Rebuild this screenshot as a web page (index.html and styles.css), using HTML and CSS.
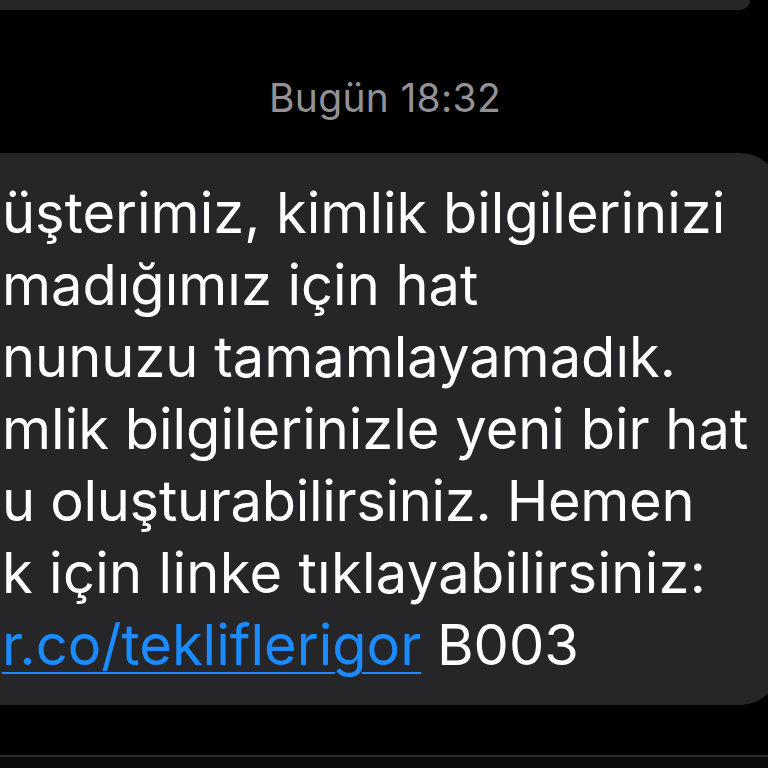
FILE: index.html
```html
<!DOCTYPE html>
<html lang="tr">
<head>
<meta charset="utf-8">
<link rel="stylesheet" href="styles.css">
</head>
<body>
<div class="screen">
  <div class="prev-bubble"></div>
  <div class="timestamp"><span class="day">Bugün</span> 18:32</div>
  <div class="bubble">
    <div class="line l1">üşterimiz, kimlik bilgilerinizi</div>
    <div class="line l2">madığımız için hat</div>
    <div class="line l3">nunuzu tamamlayamadık.</div>
    <div class="line l4">mlik bilgilerinizle yeni bir hat</div>
    <div class="line l5">u oluşturabilirsiniz. Hemen</div>
    <div class="line l6">k için linke tıklayabilirsiniz:</div>
    <div class="line l7"><a class="link" href="#">r.co/tekliflerigor</a> B003</div>
  </div>
  <div class="composer"></div>
</div>
</body>
</html>
```
FILE: styles.css
```css
html, body {
  margin: 0;
  padding: 0;
  background: #000;
}
.screen {
  width: 768px;
  height: 768px;
  overflow: hidden;
  display: flex;
  flex-direction: column;
  font-family: Inter, "Noto Sans", sans-serif;
}
.prev-bubble {
  height: 10px;
  width: 750px;
  background: #262629;
  border-radius: 0 0 40px 0;
  flex: none;
}
.timestamp {
  flex: none;
  height: 143px;
  box-sizing: border-box;
  padding-top: 66px;
  text-align: center;
  color: #929296;
  font-size: 39px;
  line-height: 44px;
  letter-spacing: 0.3px;
  padding-left: 2px;
}
.bubble {
  flex: none;
  width: 780px;
  height: 552px;
  box-sizing: border-box;
  background: #262629;
  border-radius: 0 40px 40px 0;
  padding-top: 24px;
  color: #fff;
  font-size: 56px;
  line-height: 72px;
  white-space: nowrap;
}
.line {
  padding-left: 2px;
}
.l5 {
  letter-spacing: -0.3px;
}
.l6 {
  letter-spacing: 0.3px;
}
.link {
  color: #1a8cff;
  text-decoration: underline;
  text-decoration-thickness: 2px;
  text-underline-offset: 7px;
}
.composer {
  flex: none;
  margin-top: 50px;
  height: 13px;
  border-top: 2px solid #2c2c2e;
  background: #0a0a0a;
}
```
